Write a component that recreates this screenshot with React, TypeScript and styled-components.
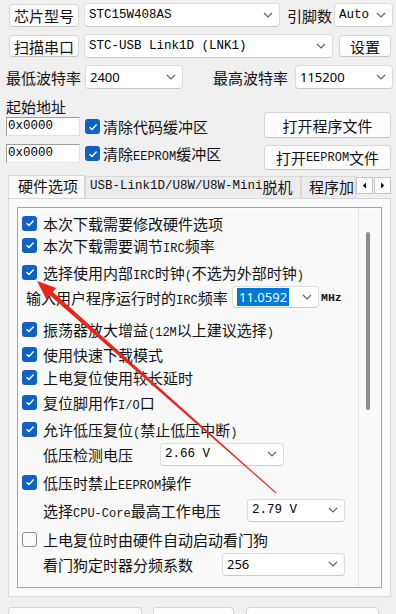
import React from "react";
import styled, { createGlobalStyle } from "styled-components";

const CJK = `"Noto Sans CJK SC", "Noto Sans", sans-serif`;
const MONO = `"Liberation Mono", "Noto Sans CJK SC", monospace`;
const SANS = `"Noto Sans", "Open Sans", sans-serif`;

const Global = createGlobalStyle`
  html, body { margin: 0; padding: 0; background: #f0f0f0; overflow: hidden; }
  body { font-family: ${CJK}; color: #000; }
`;

const Page = styled.div`
  position: relative;
  width: 396px;
  height: 614px;
  overflow: hidden;
  box-sizing: border-box;
  padding: 3px 4px 0 6px;
  display: flex;
  flex-direction: column;
  font-family: ${CJK};
  font-size: 15px;
  color: #111;
`;

const Row = styled.div<{ $mt?: number; $pl?: number }>`
  display: flex;
  align-items: center;
  height: 24px;
  margin-top: ${(p) => p.$mt ?? 0}px;
  padding-left: ${(p) => p.$pl ?? 0}px;
  white-space: nowrap;
`;

const L = styled.span<{ $size?: number }>`
  font-family: ${MONO};
  font-size: ${(p) => p.$size ?? 12}px;
`;

const Btn = styled.button<{ $w: number; $h?: number; $ml?: number; $mr?: number }>`
  box-sizing: border-box;
  width: ${(p) => p.$w}px;
  height: ${(p) => p.$h ?? 23}px;
  margin-left: ${(p) => p.$ml ?? 0}px;
  margin-right: ${(p) => p.$mr ?? 0}px;
  flex: none;
  background: #fdfdfd;
  border: 1px solid #d6d6d6;
  border-bottom-color: #c4c4c4;
  border-radius: 4px;
  font-family: ${CJK};
  font-size: 15px;
  color: #111;
  padding: 0;
  display: flex;
  align-items: center;
  justify-content: center;
  line-height: 1;
`;

const Combo = styled.div<{ $w: number; $h?: number; $ml?: number }>`
  box-sizing: border-box;
  width: ${(p) => p.$w}px;
  height: ${(p) => p.$h ?? 24}px;
  margin-left: ${(p) => p.$ml ?? 0}px;
  flex: none;
  background: #fff;
  border: 1px solid #dcdcdc;
  border-bottom-color: #cacaca;
  border-radius: 4px;
  display: flex;
  align-items: center;
  padding: 0 6px 0 4px;
`;

const ComboText = styled.span<{ $kind: "mono" | "sans" }>`
  flex: 1;
  overflow: hidden;
  white-space: pre;
  color: #000;
  font-family: ${(p) => (p.$kind === "mono" ? MONO : SANS)};
  font-size: ${(p) => (p.$kind === "mono" ? "12.5px" : "13px")};
`;

const Highlight = styled.span`
  background: #0078d7;
  color: #fff;
  padding: 1px 2px;
  font-family: ${SANS};
  font-size: 13px;
`;

const Label = styled.span<{ $w?: number; $ml?: number }>`
  display: inline-block;
  flex: none;
  width: ${(p) => (p.$w ? `${p.$w}px` : "auto")};
  margin-left: ${(p) => p.$ml ?? 0}px;
  white-space: nowrap;
`;

const Chevron = () => (
  <svg width="10" height="6" viewBox="0 0 10 6">
    <path d="M1 1 L5 5 L9 1" stroke="#5c5c5c" fill="none" strokeWidth="1.1" />
  </svg>
);

const Select: React.FC<{
  w: number;
  h?: number;
  ml?: number;
  kind?: "mono" | "sans";
  children: React.ReactNode;
}> = ({ w, h, ml, kind = "mono", children }) => (
  <Combo $w={w} $h={h} $ml={ml}>
    <ComboText $kind={kind}>{children}</ComboText>
    <Chevron />
  </Combo>
);

const Section = styled.div`
  display: flex;
  justify-content: space-between;
  margin-top: 7px;
`;

const LeftCol = styled.div`
  display: flex;
  flex-direction: column;
`;

const RightCol = styled.div`
  display: flex;
  flex-direction: column;
  padding-top: 16px;
  gap: 7px;
`;

const Caption = styled.div`
  height: 18px;
  line-height: 18px;
  margin-top: 2px;
`;

const AddrRow = styled.div<{ $mt: number }>`
  display: flex;
  align-items: center;
  height: 19px;
  margin-top: ${(p) => p.$mt}px;
  white-space: nowrap;
`;

const AddrInput = styled.div`
  box-sizing: border-box;
  width: 74px;
  height: 19px;
  background: #fff;
  border: 1px solid #e2e2e2;
  border-top-color: #9c9c9c;
  border-left-color: #9c9c9c;
  font-family: ${MONO};
  font-size: 12.5px;
  line-height: 17px;
  padding-left: 1px;
  color: #000;
`;

const Box = styled.span<{ $on: boolean; $ml?: number }>`
  box-sizing: border-box;
  width: 15px;
  height: 15px;
  flex: none;
  margin-left: ${(p) => p.$ml ?? 0}px;
  border-radius: 3px;
  background: ${(p) => (p.$on ? "#0f62c2" : "#fbfbfb")};
  border: ${(p) => (p.$on ? "none" : "1px solid #8a8a8a")};
  display: flex;
  align-items: center;
  justify-content: center;
`;

const Check: React.FC<{ on?: boolean; ml?: number }> = ({ on = true, ml }) => (
  <Box $on={on} $ml={ml}>
    {on && (
      <svg width="10" height="8" viewBox="0 0 10 8">
        <path d="M1.5 4.2 L4 6.5 L8.6 1.6" stroke="#fff" strokeWidth="1.4" fill="none" />
      </svg>
    )}
  </Box>
);

const TabBar = styled.div`
  display: flex;
  align-items: flex-end;
  height: 23px;
  margin: 5px 1px 0 2px;
`;

const Tab = styled.div<{ $active?: boolean; $w: number; $pl: number }>`
  box-sizing: border-box;
  flex: none;
  width: ${(p) => p.$w}px;
  height: ${(p) => (p.$active ? 23 : 22)}px;
  padding: 0 0 3px ${(p) => p.$pl}px;
  background: ${(p) => (p.$active ? "#f9f9f9" : "#ececec")};
  border: 1px solid #d9d9d9;
  border-bottom: none;
  display: flex;
  align-items: center;
  overflow: hidden;
  white-space: nowrap;
`;

const TabArrows = styled.div`
  display: flex;
  align-self: flex-start;
  margin-top: 2px;
  gap: 1px;
`;

const ArrowBtn = styled.div`
  box-sizing: border-box;
  width: 17px;
  height: 17px;
  background: #fdfdfd;
  border: 1px solid #c6c6c6;
  display: flex;
  align-items: center;
  justify-content: center;
`;

const Panel = styled.div`
  box-sizing: border-box;
  height: 399px;
  margin: 0 1px 0 2px;
  background: #f9f9f9;
  border: 1px solid #d9d9d9;
  padding: 8px;
`;

const Group = styled.div`
  box-sizing: border-box;
  height: 381px;
  display: flex;
  border: 1px solid #a3a3a3;
  box-shadow: inset 1px 1px 0 #fff;
`;

const Content = styled.div`
  flex: 1;
  display: flex;
  flex-direction: column;
  padding-left: 4px;
`;

const ScrollTrack = styled.div`
  width: 23px;
  flex: none;
  box-sizing: border-box;
  border-left: 1px solid #e2e2e2;
  padding: 24px 0 0 7px;
`;

const Thumb = styled.div`
  width: 4px;
  height: 178px;
  border-radius: 2px;
  background: #8c8c8c;
`;

const Opt = styled.div<{ $mt: number; $pl?: number }>`
  display: flex;
  align-items: center;
  height: 22px;
  margin-top: ${(p) => p.$mt}px;
  padding-left: ${(p) => p.$pl ?? 0}px;
  gap: 6px;
  white-space: nowrap;
`;

const FieldRow = styled.div<{ $mt: number; $pl: number }>`
  display: flex;
  align-items: center;
  height: 22px;
  margin-top: ${(p) => p.$mt}px;
  padding-left: ${(p) => p.$pl}px;
  white-space: nowrap;
`;

const BottomRow = styled.div`
  display: flex;
  margin-top: 10px;
  padding-left: 2px;
`;

const Overlay = styled.svg`
  position: absolute;
  left: 0;
  top: 0;
  pointer-events: none;
`;

function arrowPoints() {
  const tip = [37, 281];
  const tail = [276, 493];
  const dx = tail[0] - tip[0];
  const dy = tail[1] - tip[1];
  const len = Math.hypot(dx, dy);
  const ux = dx / len;
  const uy = dy / len;
  const nx = -uy;
  const ny = ux;
  const hl = 19;
  const hw = 7.5;
  const bx = tip[0] + ux * hl;
  const by = tip[1] + uy * hl;
  const head = [
    [tip[0], tip[1]],
    [bx + nx * hw, by + ny * hw],
    [bx - nx * hw, by - ny * hw],
  ];
  const sx = tip[0] + ux * (hl - 2);
  const sy = tip[1] + uy * (hl - 2);
  const shaft = [
    [sx + nx * 2.2, sy + ny * 2.2],
    [tail[0] + nx * 0.5, tail[1] + ny * 0.5],
    [tail[0] - nx * 0.5, tail[1] - ny * 0.5],
    [sx - nx * 2.2, sy - ny * 2.2],
  ];
  const f = (pts: number[][]) => pts.map((p) => `${p[0].toFixed(1)},${p[1].toFixed(1)}`).join(" ");
  return { head: f(head), shaft: f(shaft) };
}

export default function App() {
  const arrow = arrowPoints();
  return (
    <>
      <Global />
      <Page>
        <Row $pl={3}>
          <Btn $w={70}>芯片型号</Btn>
          <Select w={196} ml={5}>STC15W408AS</Select>
          <Label $ml={7}>引脚数</Label>
          <Select w={59} ml={2}>Auto</Select>
        </Row>
        <Row $mt={7} $pl={3}>
          <Btn $w={70} $h={22}>扫描串口</Btn>
          <Select w={249} ml={5}>STC-USB Link1D (LNK1)</Select>
          <Btn $w={52} $h={22} $ml={6}>设置</Btn>
        </Row>
        <Row $mt={7}>
          <Label $w={75}>最低波特率</Label>
          <Select w={98} ml={4} kind="sans">2400</Select>
          <Label $w={75} $ml={30}>最高波特率</Label>
          <Select w={98} ml={7} kind="sans">115200</Select>
        </Row>

        <Section>
          <LeftCol>
            <Caption>起始地址</Caption>
            <AddrRow $mt={1}>
              <AddrInput>0x0000</AddrInput>
              <Check ml={5} />
              <Label $ml={3}>清除代码缓冲区</Label>
            </AddrRow>
            <AddrRow $mt={8}>
              <AddrInput>0x0000</AddrInput>
              <Check ml={5} />
              <Label $ml={3}>
                清除<L>EEPROM</L>缓冲区
              </Label>
            </AddrRow>
          </LeftCol>
          <RightCol>
            <Btn $w={127} $h={26} $mr={1}>打开程序文件</Btn>
            <Btn $w={127} $h={25} $mr={1}>
              打开<L>EEPROM</L>文件
            </Btn>
          </RightCol>
        </Section>

        <TabBar>
          <Tab $active $w={77} $pl={9}>硬件选项</Tab>
          <Tab $w={216} $pl={4}>
            <L $size={12.5}>USB-Link1D/U8W/U8W-Mini</L>脱机
          </Tab>
          <Tab $w={55} $pl={7}>程序加密后传输</Tab>
          <TabArrows>
            <ArrowBtn>
              <svg width="5" height="7" viewBox="0 0 5 7">
                <path d="M4 0.5 L0.8 3.5 L4 6.5 Z" fill="#111" />
              </svg>
            </ArrowBtn>
            <ArrowBtn>
              <svg width="5" height="7" viewBox="0 0 5 7">
                <path d="M1 0.5 L4.2 3.5 L1 6.5 Z" fill="#111" />
              </svg>
            </ArrowBtn>
          </TabArrows>
        </TabBar>

        <Panel>
          <Group>
            <Content>
              <Opt $mt={4}>
                <Check />
                <span>本次下载需要修改硬件选项</span>
              </Opt>
              <Opt $mt={0}>
                <Check />
                <span>
                  本次下载需要调节<L>IRC</L>频率
                </span>
              </Opt>
              <Opt $mt={5}>
                <Check />
                <span>
                  选择使用内部<L>IRC</L>时钟<L>(</L>不选为外部时钟<L>)</L>
                </span>
              </Opt>
              <FieldRow $mt={3} $pl={4}>
                <Label $w={206}>
                  输入用户程序运行时的<L>IRC</L>频率
                </Label>
                <Combo $w={87} $h={22}>
                  <ComboText $kind="sans">
                    <Highlight>11.0592</Highlight>
                  </ComboText>
                  <Chevron />
                </Combo>
                <L $size={11.5} style={{ marginLeft: 2, fontWeight: 700 }}>MHz</L>
              </FieldRow>
              <Opt $mt={10}>
                <Check />
                <span>
                  振荡器放大增益<L>(12M</L>以上建议选择<L>)</L>
                </span>
              </Opt>
              <Opt $mt={3}>
                <Check />
                <span>使用快速下载模式</span>
              </Opt>
              <Opt $mt={1}>
                <Check />
                <span>上电复位使用较长延时</span>
              </Opt>
              <Opt $mt={3}>
                <Check />
                <span>
                  复位脚用作<L>I/O</L>口
                </span>
              </Opt>
              <Opt $mt={5}>
                <Check />
                <span>
                  允许低压复位<L>(</L>禁止低压中断<L>)</L>
                </span>
              </Opt>
              <FieldRow $mt={3} $pl={21}>
                <Label $w={117}>低压检测电压</Label>
                <Select w={124} h={23}>2.66 V</Select>
              </FieldRow>
              <Opt $mt={6}>
                <Check />
                <span>
                  低压时禁止<L>EEPROM</L>操作
                </span>
              </Opt>
              <FieldRow $mt={6} $pl={21}>
                <Label $w={204}>
                  选择<L>CPU-Core</L>最高工作电压
                </Label>
                <Select w={98} h={23}>2.79 V</Select>
              </FieldRow>
              <Opt $mt={7}>
                <Check on={false} />
                <span>上电复位时由硬件自动启动看门狗</span>
              </Opt>
              <FieldRow $mt={3} $pl={21}>
                <Label $w={179}>看门狗定时器分频系数</Label>
                <Select w={123} h={23} kind="sans">256</Select>
              </FieldRow>
            </Content>
            <ScrollTrack>
              <Thumb />
            </ScrollTrack>
          </Group>
        </Panel>

        <BottomRow>
          <Btn $w={134} $h={26}>下载/编程</Btn>
          <Btn $w={81} $h={26} $ml={11}>停止</Btn>
          <Btn $w={133} $h={26} $ml={12}>重复编程</Btn>
        </BottomRow>

        <Overlay width="396" height="614" viewBox="0 0 396 614">
          <polygon points={arrow.shaft} fill="#e8261c" />
          <polygon points={arrow.head} fill="#e8261c" />
        </Overlay>
      </Page>
    </>
  );
}
